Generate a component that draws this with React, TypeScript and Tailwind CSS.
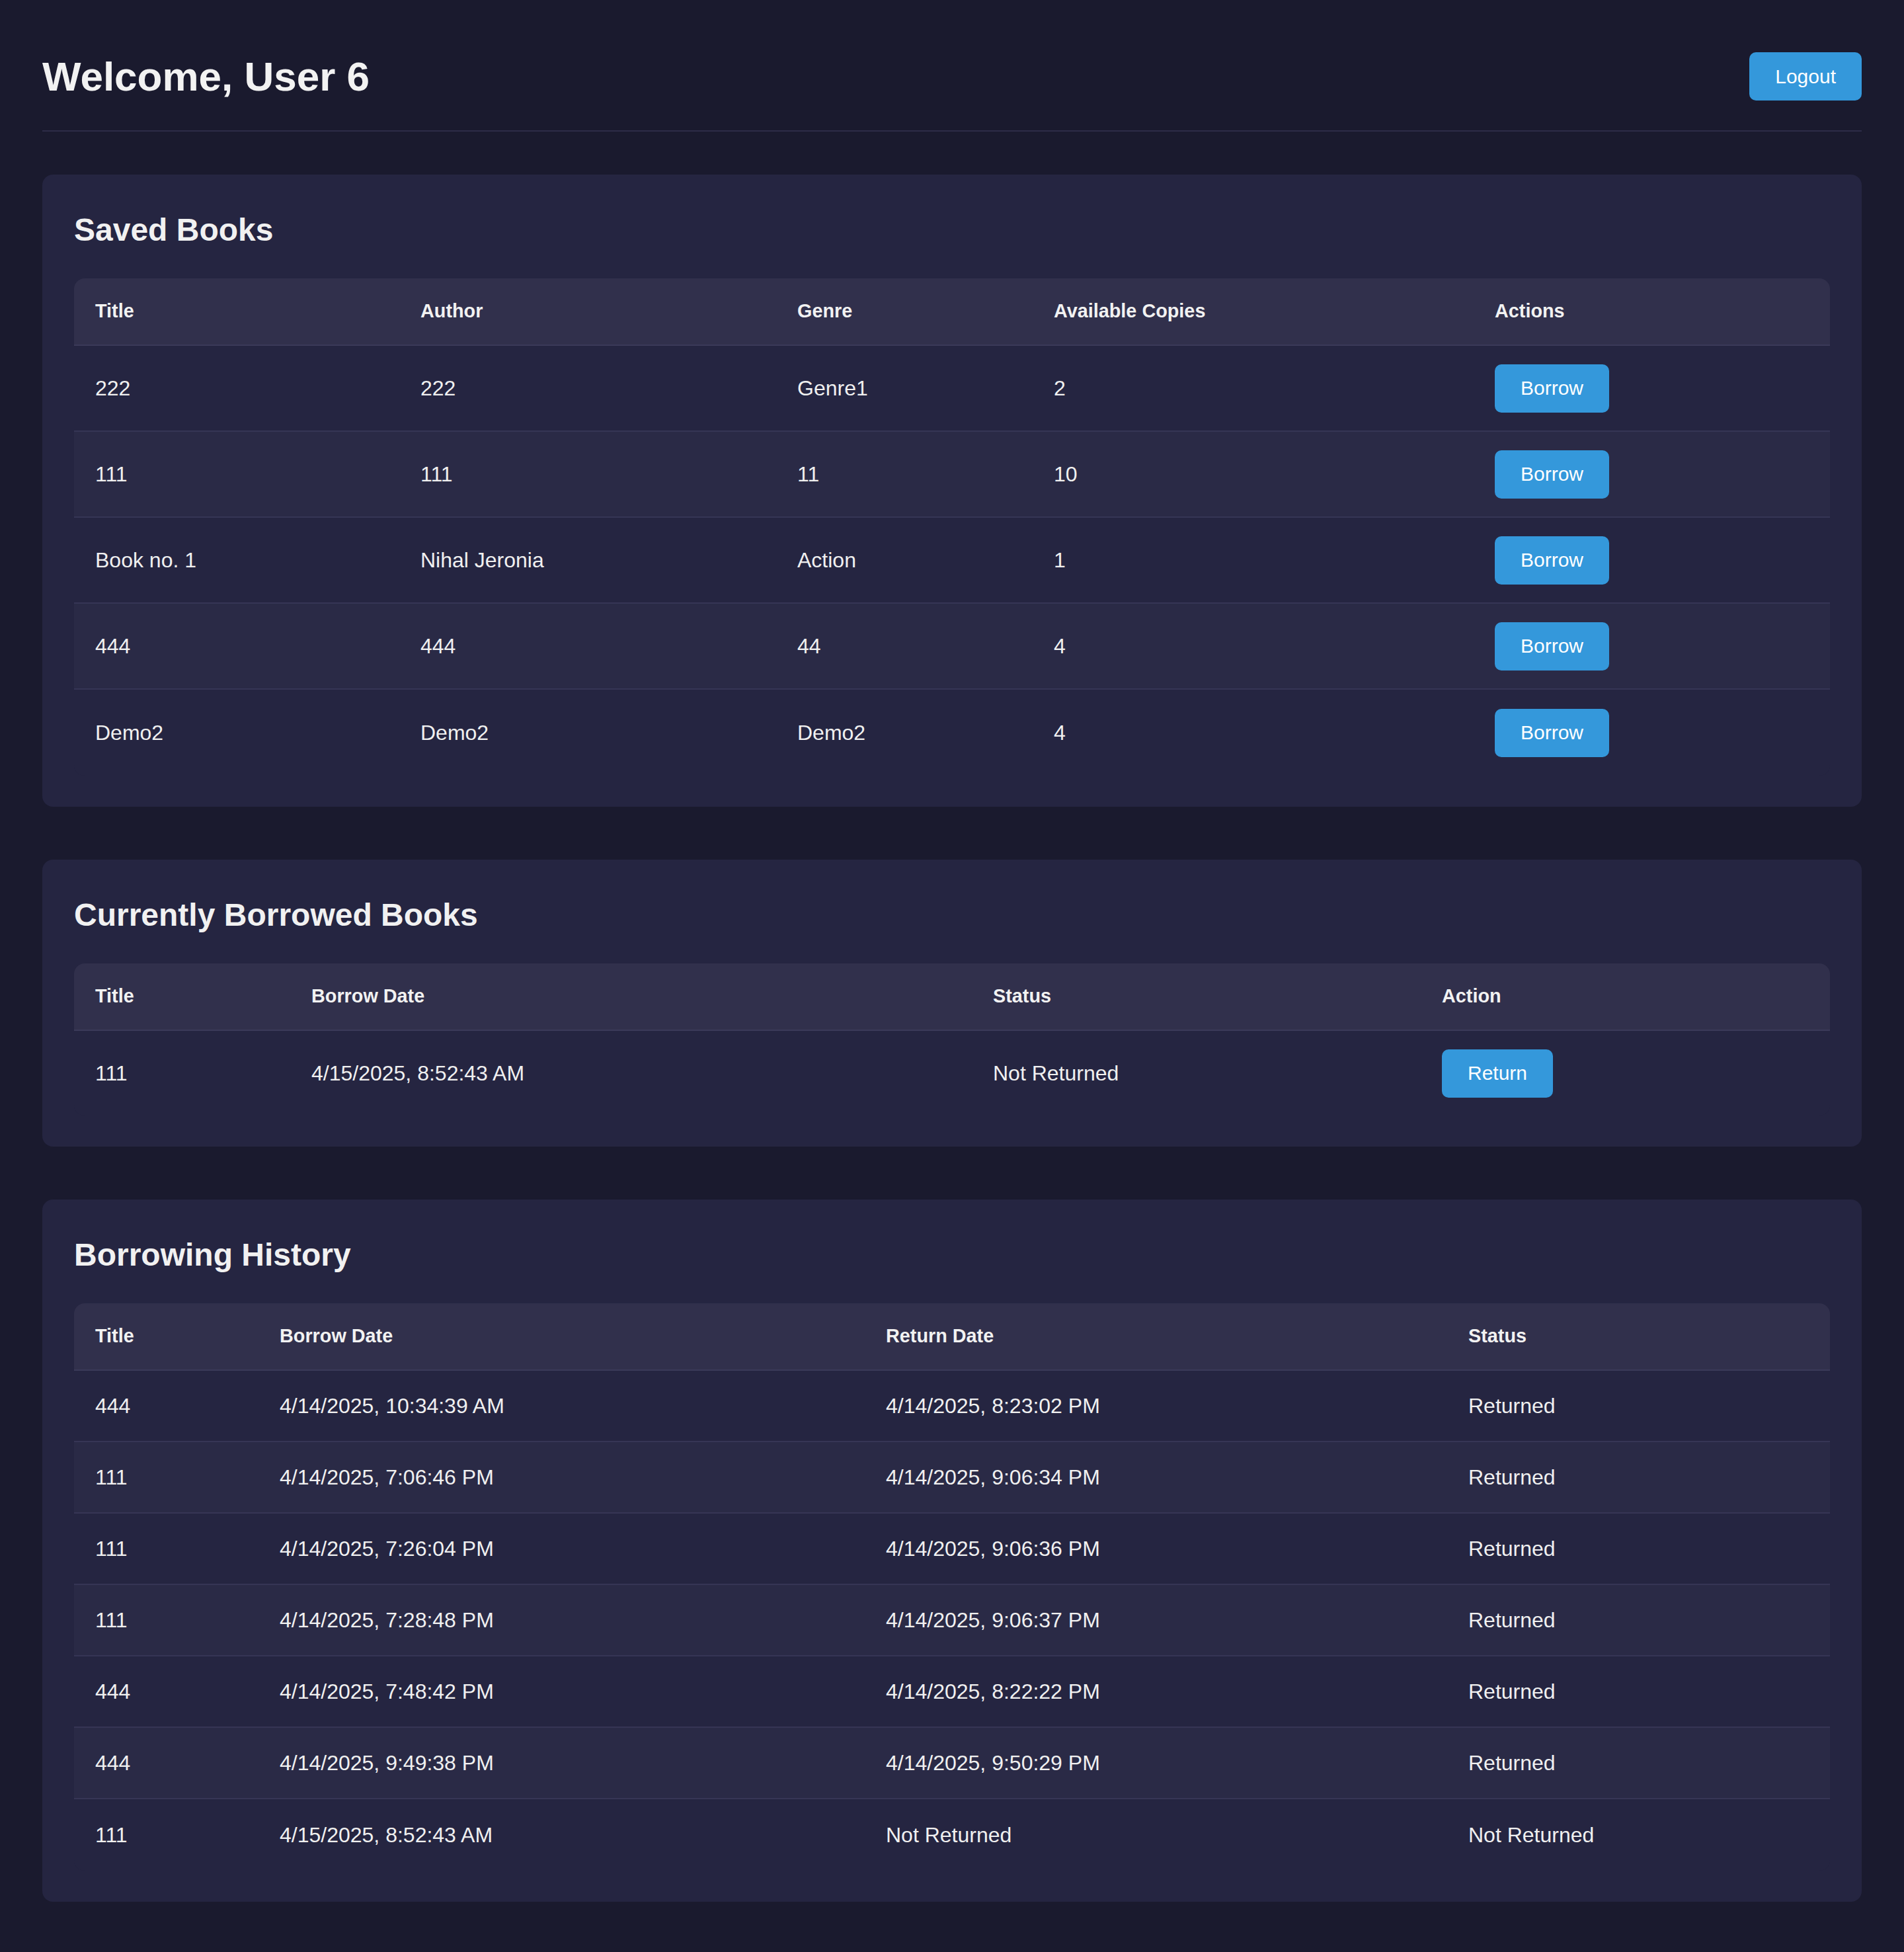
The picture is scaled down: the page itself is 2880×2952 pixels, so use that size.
import React from "react";

const FONT = { fontFamily: '"Liberation Sans", Arial, Helvetica, sans-serif' };

function Btn({ label }: { label: string }) {
  return (
    <button className="h-[73px] px-[39px] rounded-[10px] bg-[#3498db] text-white text-[30px] leading-none">
      {label}
    </button>
  );
}

type Row = (string | React.ReactNode)[];

function Table({
  cols,
  headers,
  rows,
  rowH,
}: {
  cols: string;
  headers: string[];
  rows: Row[];
  rowH: string;
}) {
  return (
    <div className="rounded-[16px] overflow-hidden bg-[#252541]">
      <div className={`grid ${cols} h-[102px] bg-[#31304c] border-b-2 border-[#3b3a59] items-center`}>
        {headers.map((h) => (
          <div key={h} className="pl-[32px] text-[28.8px] font-bold text-[#f2f2f2]">
            {h}
          </div>
        ))}
      </div>
      {rows.map((r, i) => (
        <div
          key={i}
          className={`grid ${cols} ${rowH} items-center ${
            i % 2 === 1 ? "bg-[#2a2a46]" : "bg-[#252541]"
          } ${i < rows.length - 1 ? "border-b-2 border-[#363555]" : ""}`}
        >
          {r.map((c, j) => (
            <div key={j} className="pl-[32px] text-[32px] text-[#f0f0f0]">
              {c}
            </div>
          ))}
        </div>
      ))}
    </div>
  );
}

function Card({ title, children }: { title: string; children: React.ReactNode }) {
  return (
    <section className="rounded-[16px] bg-[#252541] pt-[50px] px-[48px] pb-[47px]">
      <h2 className="text-[48px] font-bold leading-[67px] mb-[40px] text-[#f1f1f1]">{title}</h2>
      {children}
    </section>
  );
}

export default function App() {
  const saved: Row[] = [
    ["222", "222", "Genre1", "2", <Btn label="Borrow" />],
    ["111", "111", "11", "10", <Btn label="Borrow" />],
    ["Book no. 1", "Nihal Jeronia", "Action", "1", <Btn label="Borrow" />],
    ["444", "444", "44", "4", <Btn label="Borrow" />],
    ["Demo2", "Demo2", "Demo2", "4", <Btn label="Borrow" />],
  ];
  const borrowed: Row[] = [["111", "4/15/2025, 8:52:43 AM", "Not Returned", <Btn label="Return" />]];
  const history: Row[] = [
    ["444", "4/14/2025, 10:34:39 AM", "4/14/2025, 8:23:02 PM", "Returned"],
    ["111", "4/14/2025, 7:06:46 PM", "4/14/2025, 9:06:34 PM", "Returned"],
    ["111", "4/14/2025, 7:26:04 PM", "4/14/2025, 9:06:36 PM", "Returned"],
    ["111", "4/14/2025, 7:28:48 PM", "4/14/2025, 9:06:37 PM", "Returned"],
    ["444", "4/14/2025, 7:48:42 PM", "4/14/2025, 8:22:22 PM", "Returned"],
    ["444", "4/14/2025, 9:49:38 PM", "4/14/2025, 9:50:29 PM", "Returned"],
    ["111", "4/15/2025, 8:52:43 AM", "Not Returned", "Not Returned"],
  ];

  return (
    <div style={FONT} className="min-h-screen bg-[#1a1a2e] px-[64px] pt-[79px] pb-[80px] text-[#f0f0f0]">
      <header className="flex items-center justify-between pb-[45px] border-b-2 border-[#2d2c47] mb-[65px]">
        <h1 className="text-[62px] font-bold leading-[73px] text-[#f2f2f2]">Welcome, User 6</h1>
        <Btn label="Logout" />
      </header>
      <div className="flex flex-col gap-[80px]">
        <Card title="Saved Books">
          <Table
            cols="grid-cols-[492px_570px_388px_667px_1fr]"
            headers={["Title", "Author", "Genre", "Available Copies", "Actions"]}
            rows={saved}
            rowH="h-[130px]"
          />
        </Card>
        <Card title="Currently Borrowed Books">
          <Table
            cols="grid-cols-[327px_1031px_679px_1fr]"
            headers={["Title", "Borrow Date", "Status", "Action"]}
            rows={borrowed}
            rowH="h-[128px]"
          />
        </Card>
        <Card title="Borrowing History">
          <Table
            cols="grid-cols-[279px_917px_881px_1fr]"
            headers={["Title", "Borrow Date", "Return Date", "Status"]}
            rows={history}
            rowH="h-[108px]"
          />
        </Card>
      </div>
    </div>
  );
}
